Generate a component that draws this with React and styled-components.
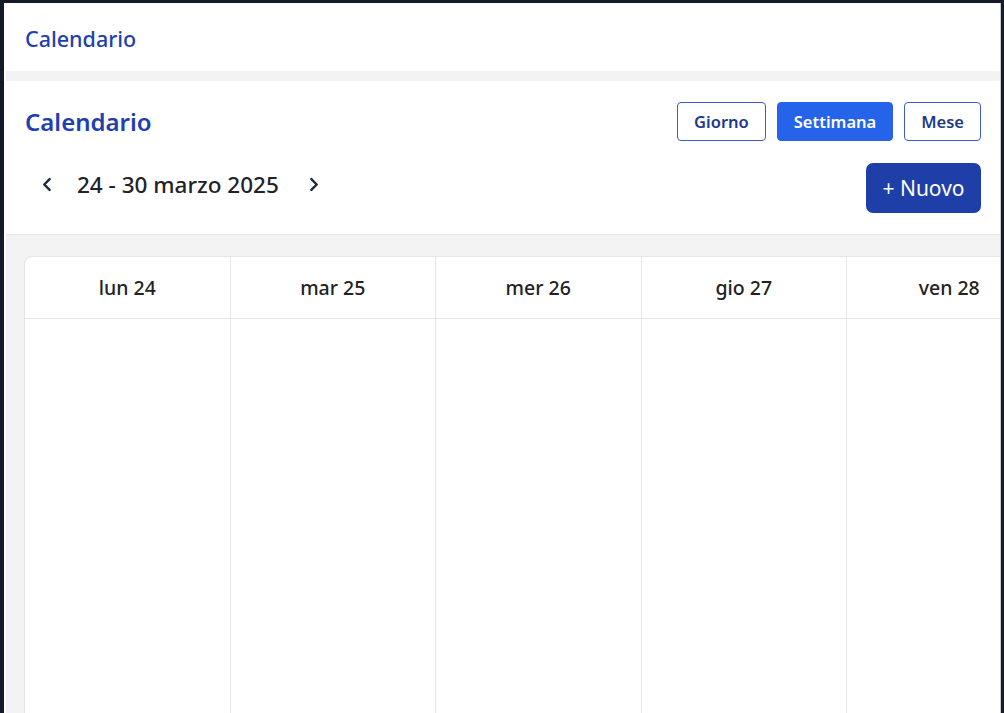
import styled, { createGlobalStyle } from "styled-components";

const GlobalStyle = createGlobalStyle`
  html, body {
    margin: 0;
    padding: 0;
    height: 100%;
    background: #151a2b;
    overflow: hidden;
  }
  body {
    font-family: "Noto Sans", "Open Sans", sans-serif;
  }
  #root {
    height: 100%;
  }
`;

const Frame = styled.div`
  height: calc(100% - 3px);
  margin: 3px 3px 0 4px;
  background: #fff;
  display: flex;
  flex-direction: column;
  border-right: 1px solid #c9ccd3;
  overflow: hidden;
`;

const TopBar = styled.header`
  height: 68px;
  flex-shrink: 0;
  display: flex;
  align-items: center;
  padding: 2px 21px 0;
  box-sizing: border-box;
  background: #fff;
`;

const TopTitle = styled.h1`
  margin: 0;
  font-size: 21.5px;
  font-weight: 500;
  color: #1e40af;
`;

const Main = styled.main`
  flex: 1;
  margin-left: 2px;
  background: #f3f3f4;
  padding-top: 10px;
  display: flex;
  flex-direction: column;
  min-height: 0;
`;

const Panel = styled.section`
  background: #fff;
  padding: 21px 19px 21px 19px;
  border-bottom: 1px solid #e6e6e6;
  display: flex;
  flex-direction: column;
  gap: 22px;
`;

const Row = styled.div`
  display: flex;
  justify-content: space-between;
  align-items: ${(p) => p.$align || "center"};
`;

const Title = styled.h2`
  margin: 0;
  font-size: 24px;
  font-weight: 600;
  color: #1e40af;
`;

const ViewGroup = styled.div`
  display: flex;
  gap: 11px;
`;

const ViewButton = styled.button`
  height: 39px;
  padding: 0 16px;
  border-radius: 4px;
  font-family: inherit;
  font-size: 16.5px;
  font-weight: 600;
  cursor: pointer;
  border: 1.5px solid ${(p) => (p.$active ? "#2563eb" : "#3a5cc7")};
  background: ${(p) => (p.$active ? "#2563eb" : "#fff")};
  color: ${(p) => (p.$active ? "#fff" : "#1e3a8a")};
`;

const DateNav = styled.div`
  display: flex;
  align-items: center;
  height: 42px;
  padding-left: 12px;
`;

const Arrow = styled.button`
  border: none;
  background: none;
  padding: 0;
  width: 20px;
  height: 20px;
  display: flex;
  align-items: center;
  justify-content: center;
  cursor: pointer;
  color: #1f2937;
`;

const DateLabel = styled.span`
  font-size: 22.5px;
  font-weight: 500;
  color: #1f2328;
  margin: 0 25px 0 20px;
`;

const NewButton = styled.button`
  height: 50px;
  width: 115px;
  border: none;
  border-radius: 7px;
  background: #1e3ea8;
  color: #fff;
  font-family: inherit;
  font-size: 21px;
  cursor: pointer;
`;

const CalendarArea = styled.div`
  flex: 1;
  padding: 21px 0 0 18px;
  min-height: 0;
  overflow: hidden;
`;

const Card = styled.div`
  width: 1440px;
  height: 100%;
  background: #fff;
  border: 1px solid #e6e6e6;
  border-right: none;
  border-bottom: none;
  border-top-left-radius: 8px;
  display: grid;
  grid-template-columns: repeat(7, 205.5px);
  grid-template-rows: 62px 1fr;
`;

const DayHead = styled.div`
  display: flex;
  align-items: center;
  justify-content: center;
  font-size: 19.5px;
  font-weight: 500;
  color: #222;
  border-bottom: 1px solid #e6e6e6;
  border-right: 1px solid #e6e6e6;
`;

const DayCol = styled.div`
  border-right: 1px solid #e6e6e6;
`;

const Chevron = ({ dir }) => (
  <svg width="15" height="15" viewBox="0 0 14 14" fill="none">
    <path
      d={dir === "left" ? "M9 2 L4 7 L9 12" : "M5 2 L10 7 L5 12"}
      stroke="currentColor"
      strokeWidth="2.3"
      strokeLinecap="round"
      strokeLinejoin="round"
    />
  </svg>
);

const days = ["lun 24", "mar 25", "mer 26", "gio 27", "ven 28", "sab 29", "dom 30"];

export default function App() {
  return (
    <>
      <GlobalStyle />
      <Frame>
        <TopBar>
          <TopTitle>Calendario</TopTitle>
        </TopBar>
        <Main>
          <Panel>
            <Row>
              <Title>Calendario</Title>
              <ViewGroup>
                <ViewButton>Giorno</ViewButton>
                <ViewButton $active>Settimana</ViewButton>
                <ViewButton>Mese</ViewButton>
              </ViewGroup>
            </Row>
            <Row $align="flex-start">
              <DateNav>
                <Arrow aria-label="precedente">
                  <Chevron dir="left" />
                </Arrow>
                <DateLabel>24 - 30 marzo 2025</DateLabel>
                <Arrow aria-label="successivo">
                  <Chevron dir="right" />
                </Arrow>
              </DateNav>
              <NewButton>+ Nuovo</NewButton>
            </Row>
          </Panel>
          <CalendarArea>
            <Card>
              {days.map((d) => (
                <DayHead key={d}>{d}</DayHead>
              ))}
              {days.map((d) => (
                <DayCol key={d} />
              ))}
            </Card>
          </CalendarArea>
        </Main>
      </Frame>
    </>
  );
}
